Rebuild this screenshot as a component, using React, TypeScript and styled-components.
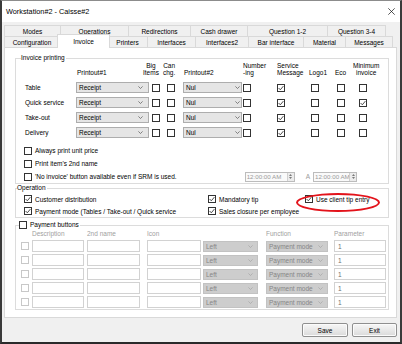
import React from "react";
import styled, { createGlobalStyle } from "styled-components";

const Global = createGlobalStyle`
  html, body { margin: 0; padding: 0; background: #f0f0f0; }
  body { font-family: "Liberation Sans", Arial, sans-serif; font-size: 6.5px; color: #000; }
  * { box-sizing: border-box; }
`;

const Window = styled.div`
  width: 402px;
  height: 344px;
  background: #f0f0f0;
  border-top: 1px solid #8c8c8c;
  border-left: 2px solid #3a3a3a;
  border-right: 2px solid #3a3a3a;
  border-bottom: 2px solid #2a2a2a;
  display: flex;
  flex-direction: column;
  overflow: hidden;
`;

const TitleBar = styled.div`
  height: 21px;
  flex: none;
  background: #fff;
  display: flex;
  align-items: center;
  justify-content: space-between;
  padding: 0 5px 0 4px;
  font-size: 7.3px;
`;

const Body = styled.div`
  flex: 1;
  display: flex;
  flex-direction: column;
  padding: 3px 3px 5px 2px;
`;

const TabRow = styled.div<{ $back?: boolean }>`
  display: flex;
  height: 11px;
  flex: none;
  padding-bottom: ${(p) => (p.$back ? 1 : 0)}px;
`;

const Tab = styled.div<{ $w: number; $active?: boolean }>`
  flex: none;
  width: ${(p) => p.$w + 1 + (p.$active ? 4 : 0)}px;
  height: ${(p) => (p.$active ? 14 : 11)}px;
  margin: ${(p) => (p.$active ? "-2px -3px 0 -2px" : "0 -1px 0 0")};
  border: 1px solid #d9d9d9;
  border-bottom: none;
  background: ${(p) => (p.$active ? "#fff" : "#f0f0f0")};
  display: flex;
  align-items: center;
  justify-content: center;
  white-space: nowrap;
  position: relative;
  z-index: ${(p) => (p.$active ? 2 : 0)};
`;

const Panel = styled.div`
  flex: none;
  height: 271px;
  background: #fff;
  border: 1px solid #d9d9d9;
  padding: 6px 7px 0 10px;
  display: flex;
  flex-direction: column;
`;

const Group = styled.fieldset<{ $mt?: number }>`
  margin: ${(p) => p.$mt ?? 0}px 0 0 0;
  padding: 0;
  border: 1px solid #dcdcdc;
  min-width: 0;
`;

const Legend = styled.legend<{ $ml: number }>`
  margin-left: ${(p) => p.$ml}px;
  padding: 0 1px 0 0;
  line-height: 8px;
  height: 8px;
  display: flex;
  align-items: center;
  gap: 3px;
`;

const CheckLegend = styled(Legend)`
  height: 10px;
  line-height: 10px;
`;

const GroupBody = styled.div<{ $pl: number; $pt?: number; $pb?: number }>`
  padding: ${(p) => p.$pt ?? 0}px 0 ${(p) => p.$pb ?? 0}px ${(p) => p.$pl}px;
`;

const HeaderGrid = styled.div`
  display: grid;
  grid-template-columns: 53px 66px 20px 21px 59px 34px 32px 26px 18px 1fr;
  height: 14px;
  align-items: end;
`;

const HeadLabel = styled.div<{ $center?: boolean }>`
  justify-self: start;
  display: inline-block;
  line-height: 7px;
  white-space: nowrap;
  text-align: ${(p) => (p.$center ? "center" : "left")};
`;

const RowsGrid = styled.div`
  display: grid;
  grid-template-columns: 52px 76px 15px 16px 60px 34px 34px 26px 22px 1fr;
  grid-auto-rows: 15px;
  align-items: center;
  margin-top: 4px;
`;

const RowLabel = styled.div`
  padding-left: 1px;
  white-space: nowrap;
`;

const Combo = styled.div<{ $w: number; $disabled?: boolean; $pr?: number }>`
  width: ${(p) => p.$w}px;
  height: 11px;
  border: 1px solid ${(p) => (p.$disabled ? "#c2c2c2" : "#adadad")};
  background: ${(p) => (p.$disabled ? "#cdcdcd" : "#e5e5e5")};
  color: ${(p) => (p.$disabled ? "#858585" : "#000")};
  display: flex;
  align-items: center;
  justify-content: space-between;
  padding: 0 ${(p) => p.$pr ?? 5}px 0 2px;
  white-space: nowrap;
  overflow: hidden;
`;

const OptionList = styled.div`
  display: grid;
  grid-auto-rows: 13px;
  padding-top: 4px;
`;

const OptionRow = styled.div`
  display: flex;
  align-items: center;
  justify-content: space-between;
`;

const CheckLabel = styled.label<{ $muted?: boolean }>`
  display: flex;
  align-items: center;
  gap: 3px;
  white-space: nowrap;
  color: ${(p) => (p.$muted ? "#9a9a9a" : "#000")};
`;

const Box = styled.span<{ $disabled?: boolean }>`
  flex: none;
  width: 8px;
  height: 8px;
  border: 1px solid ${(p) => (p.$disabled ? "#c8c8c8" : "#333")};
  background: #fff;
  display: inline-flex;
  align-items: center;
  justify-content: center;
`;

const TimeGroup = styled.div`
  display: flex;
  align-items: center;
  margin-right: 31px;
  color: #9a9a9a;
`;

const TimePicker = styled.div<{ $w: number }>`
  width: ${(p) => p.$w}px;
  height: 10px;
  border: 1px solid #bcbcbc;
  background: #fafafa;
  display: flex;
  align-items: center;
  overflow: hidden;
  font-size: 6.2px;
`;

const TimeText = styled.span`
  flex: 1;
  padding-left: 1px;
  white-space: nowrap;
  overflow: hidden;
`;

const Spin = styled.span`
  flex: none;
  width: 7px;
  height: 100%;
  border-left: 1px solid #d0d0d0;
  background: #ececec;
  display: flex;
  flex-direction: column;
  align-items: center;
  justify-content: space-evenly;
`;

const ToLabel = styled.span`
  margin: 0 3px 0 11px;
`;

const OperationGrid = styled.div`
  display: grid;
  grid-template-columns: 184px 97px 1fr;
  grid-auto-rows: 12px;
  align-items: center;
`;

const Cell = styled.div`
  position: relative;
  display: flex;
  align-items: center;
`;

const Highlight = styled.div`
  position: absolute;
  left: -9px;
  top: -2px;
  width: 84px;
  height: 19px;
  border: 2px solid #e3131b;
  border-radius: 50%;
  pointer-events: none;
`;

const PayHeader = styled.div`
  display: grid;
  grid-template-columns: 11px 55px 60px 56px 63px 68px 52px;
  line-height: 8px;
  color: #a0a0a0;
`;

const PayGrid = styled.div`
  display: grid;
  grid-template-columns: 11px 55px 60px 56px 63px 68px 52px;
  grid-auto-rows: 12px;
  row-gap: 2px;
  margin-top: 2px;
  align-items: center;
`;

const TextBox = styled.div<{ $w: number }>`
  width: ${(p) => p.$w}px;
  height: 12px;
  border: 1px solid #d2d2d2;
  background: #fff;
  display: flex;
  align-items: center;
  padding-left: 3px;
  color: #6d6d6d;
`;

const Footer = styled.div`
  display: flex;
  justify-content: flex-end;
  gap: 4px;
  margin-top: 5px;
`;

const Button = styled.button<{ $w: number }>`
  width: ${(p) => p.$w}px;
  height: 14px;
  padding: 0;
  font-family: inherit;
  font-size: 6.5px;
  color: #000;
  border: 1px solid #8f8f8f;
  border-radius: 2px;
  background: linear-gradient(#f7f7f7, #dadada);
  box-shadow: inset 0 0 0 1px #fbfbfb;
`;

const Chevron = ({ color }: { color: string }) => (
  <svg width="5" height="3" viewBox="0 0 5 3">
    <polyline points="0.4,0.4 2.5,2.5 4.6,0.4" fill="none" stroke={color} strokeWidth="0.7" />
  </svg>
);

const CheckBox = ({ checked, disabled }: { checked?: boolean; disabled?: boolean }) => (
  <Box $disabled={disabled}>
    {checked && (
      <svg width="6" height="6" viewBox="0 0 6 6">
        <polyline points="0.6,3 2.3,4.8 5.4,1.1" fill="none" stroke="#3a3a3a" strokeWidth="0.9" />
      </svg>
    )}
  </Box>
);

const Check = ({ label, checked, muted }: { label: string; checked?: boolean; muted?: boolean }) => (
  <CheckLabel $muted={muted}>
    <CheckBox checked={checked} />
    {label}
  </CheckLabel>
);

const Time = ({ w }: { w: number }) => (
  <TimePicker $w={w}>
    <TimeText>12:00:00 AM</TimeText>
    <Spin>
      <svg width="3" height="2" viewBox="0 0 3 2"><polygon points="0,2 1.5,0 3,2" fill="#7a7a7a" /></svg>
      <svg width="3" height="2" viewBox="0 0 3 2"><polygon points="0,0 1.5,2 3,0" fill="#7a7a7a" /></svg>
    </Spin>
  </TimePicker>
);

const row1 = [
  ["Modes", 56],
  ["Operations", 68],
  ["Redirections", 62],
  ["Cash drawer", 57],
  ["Question 1-2", 80],
  ["Question 3-4", 58],
] as const;

const row2 = [
  ["Configuration", 55],
  ["Invoice", 48],
  ["Printers", 40],
  ["Interfaces", 48],
  ["Interfaces2", 53],
  ["Bar interface", 55],
  ["Material", 42],
  ["Messages", 47],
] as const;

const invoiceRows = [
  { label: "Table", min: false },
  { label: "Quick service", min: true },
  { label: "Take-out", min: false },
  { label: "Delivery", min: false },
];

export default function App() {
  return (
    <>
      <Global />
      <Window>
        <TitleBar>
          <span>Workstation#2 - Caisse#2</span>
          <svg width="7" height="7" viewBox="0 0 7 7">
            <path d="M0.3,0.3 L6.7,6.7 M6.7,0.3 L0.3,6.7" stroke="#111" strokeWidth="0.7" />
          </svg>
        </TitleBar>
        <Body>
          <TabRow $back>
            {row1.map(([t, w]) => (
              <Tab key={t} $w={w}>{t}</Tab>
            ))}
          </TabRow>
          <TabRow>
            {row2.map(([t, w]) => (
              <Tab key={t} $w={w} $active={t === "Invoice"}>{t}</Tab>
            ))}
          </TabRow>
          <Panel>
            <Group>
              <Legend $ml={5}>Invoice printing</Legend>
              <GroupBody $pl={8}>
                <HeaderGrid>
                  <span />
                  <HeadLabel>Printout#1</HeadLabel>
                  <HeadLabel $center>Big<br />Items</HeadLabel>
                  <HeadLabel $center>Can<br />chg.</HeadLabel>
                  <HeadLabel>Printout#2</HeadLabel>
                  <HeadLabel>Number<br />-ing</HeadLabel>
                  <HeadLabel>Service<br />Message</HeadLabel>
                  <HeadLabel>Logo1</HeadLabel>
                  <HeadLabel>Eco</HeadLabel>
                  <HeadLabel $center>Minimum<br />invoice</HeadLabel>
                </HeaderGrid>
                <RowsGrid>
                  {invoiceRows.map((r) => (
                    <React.Fragment key={r.label}>
                      <RowLabel>{r.label}</RowLabel>
                      <Combo $w={73}>Receipt<Chevron color="#555" /></Combo>
                      <CheckBox />
                      <CheckBox />
                      <Combo $w={59} $pr={1}>Nul<Chevron color="#555" /></Combo>
                      <CheckBox />
                      <CheckBox checked />
                      <CheckBox />
                      <CheckBox />
                      <CheckBox checked={r.min} />
                    </React.Fragment>
                  ))}
                </RowsGrid>
                <OptionList>
                  <OptionRow><Check label="Always print unit price" /></OptionRow>
                  <OptionRow><Check label="Print item's 2nd name" /></OptionRow>
                  <OptionRow>
                    <Check label="'No invoice' button available even if SRM is used." />
                    <TimeGroup>
                      <Time w={50} />
                      <ToLabel>A</ToLabel>
                      <Time w={44} />
                    </TimeGroup>
                  </OptionRow>
                </OptionList>
              </GroupBody>
            </Group>

            <Group>
              <Legend $ml={1}>Operation</Legend>
              <GroupBody $pl={8} $pt={1}>
                <OperationGrid>
                  <Cell><Check label="Customer distribution" checked /></Cell>
                  <Cell><Check label="Mandatory tip" checked /></Cell>
                  <Cell>
                    <Check label="Use client tip entry" checked />
                    <Highlight />
                  </Cell>
                  <Cell><Check label="Payment mode (Tables / Take-out / Quick service" checked /></Cell>
                  <Cell><Check label="Sales closure per employee" checked /></Cell>
                  <Cell />
                </OperationGrid>
              </GroupBody>
            </Group>

            <Group $mt={2}>
              <CheckLegend $ml={3}>
                <CheckBox />
                Payment buttons
              </CheckLegend>
              <GroupBody $pl={5} $pb={1}>
                <PayHeader>
                  <span />
                  <span>Description</span>
                  <span>2nd name</span>
                  <span>Icon</span>
                  <span />
                  <span>Function</span>
                  <span>Parameter</span>
                </PayHeader>
                <PayGrid>
                  {[0, 1, 2, 3, 4].map((i) => (
                    <React.Fragment key={i}>
                      <CheckBox disabled />
                      <TextBox $w={52} />
                      <TextBox $w={53} />
                      <TextBox $w={54} />
                      <Combo $w={55} $disabled $pr={4}>Left<Chevron color="#a5a5a5" /></Combo>
                      <Combo $w={62} $disabled $pr={4}>Payment mode<Chevron color="#a5a5a5" /></Combo>
                      <TextBox $w={52}>1</TextBox>
                    </React.Fragment>
                  ))}
                </PayGrid>
              </GroupBody>
            </Group>
          </Panel>
          <Footer>
            <Button $w={46}>Save</Button>
            <Button $w={45}>Exit</Button>
          </Footer>
        </Body>
      </Window>
    </>
  );
}
